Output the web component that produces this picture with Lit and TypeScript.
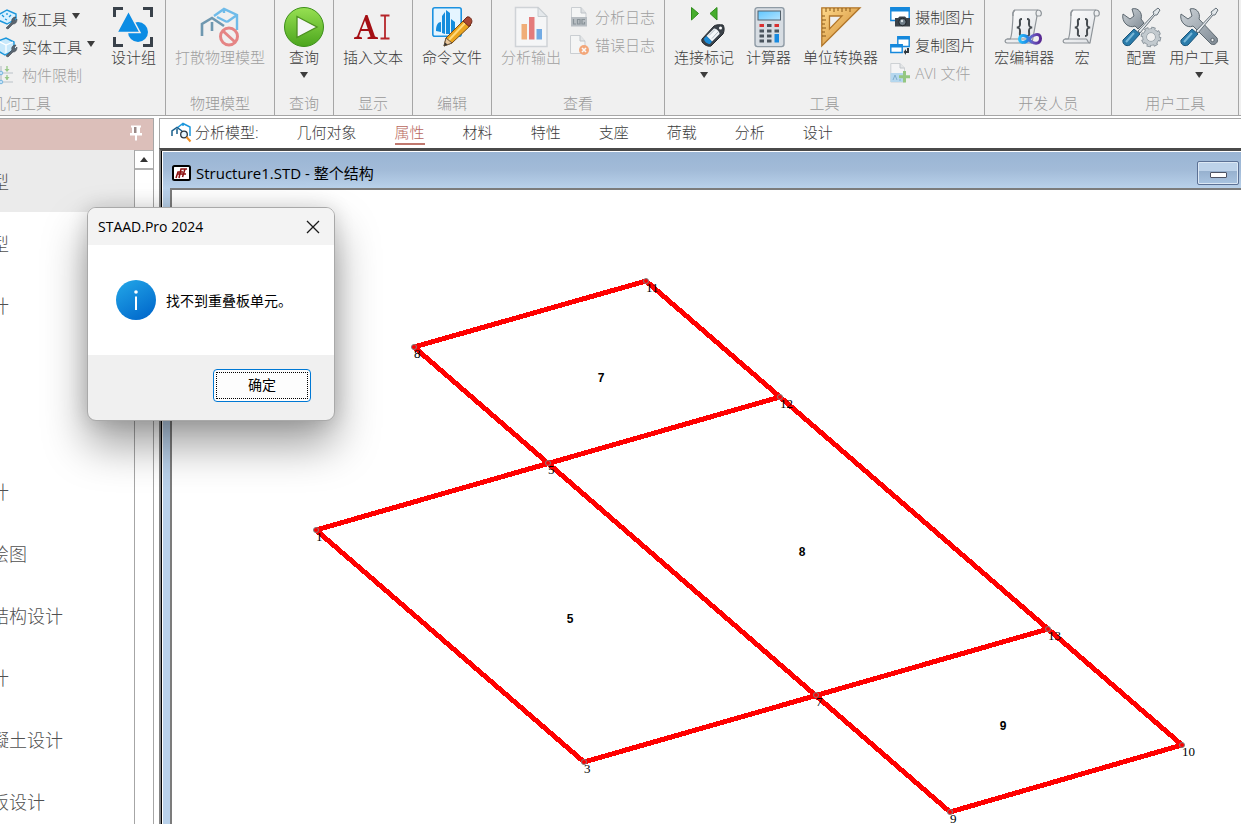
import { LitElement, html, css, svg, nothing } from "lit";
import { customElement, property } from "lit/decorators.js";

const defs = svg`<defs>
  <linearGradient id="blade" x1="0" y1="0" x2="1" y2="1"><stop offset="0" stop-color="#ffd98a"/><stop offset="1" stop-color="#c9822a"/></linearGradient>
  <linearGradient id="green" x1="0" y1="0" x2="0" y2="1"><stop offset="0" stop-color="#97e052"/><stop offset="1" stop-color="#4ba51d"/></linearGradient>
  <linearGradient id="sheet" x1="0" y1="0" x2="1" y2="1"><stop offset="0" stop-color="#fff"/><stop offset="1" stop-color="#dcdfe3"/></linearGradient>
  <linearGradient id="steel" x1="0" y1="0" x2="1" y2="1"><stop offset="0" stop-color="#cdd3d8"/><stop offset="1" stop-color="#7f8a94"/></linearGradient>
  <linearGradient id="inf" gradientUnits="userSpaceOnUse" x1="14" y1="0" x2="38" y2="0"><stop offset="0" stop-color="#2cc8ff"/><stop offset=".35" stop-color="#1b8fe8"/><stop offset=".6" stop-color="#6a5cc4"/><stop offset="1" stop-color="#55208a"/></linearGradient>
  <linearGradient id="lcd" x1="0" y1="0" x2="1" y2="1"><stop offset="0" stop-color="#5fc6ff"/><stop offset="1" stop-color="#b5e4ff"/></linearGradient>
</defs>`;

const wrench = svg`<path d="M2 7 9 12 13 9 11 2C17 0 22 6 20 12L38 31C40 35 36 39 32 37L14 19C8 22 0 15 2 7Z" fill="url(#steel)" stroke="#5d6870" stroke-width="1"/>`;
const driver = svg`<path d="M17 24 33 7 32 5 37 1 39 3 36 8 34 8 19 26Z" fill="#e2e7ea" stroke="#66717a"/><path d="M13 22 19 27 9 38C5 40 1 37 2 33Z" fill="#2b7cab" stroke="#1c5578"/><path d="M13 26 5 35" stroke="#79b8d8" stroke-width="2"/>`;
const gear = svg`<g><circle cx="30" cy="30" r="8.500" fill="none" stroke="#89939b" stroke-width="3.600" stroke-dasharray="4 2.675"/><circle cx="30" cy="30" r="6.300" fill="none" stroke="#89939b" stroke-width="5"/><circle cx="30" cy="30" r="8.400" fill="none" stroke="#c3cacf" stroke-width="2" stroke-dasharray="2.600 3.997" stroke-dashoffset="-.7"/><circle cx="30" cy="30" r="6.300" fill="none" stroke="#c3cacf" stroke-width="3.400"/><circle cx="30" cy="30" r="3.800" fill="#f0f0f0"/></g>`;
const scroll = svg`<path d="M11 3H34C38 3 38 8 36 9H33L28 36H3C1 36 0 33 3 32H6C8 31 9 12 9 6Z" fill="url(#sheet)" stroke="#8e9499" stroke-width="1.2"/><path d="M11 3C8 4 9 7 9 9M34 3C31 4 32 8 33 9M3 32H24C26 32 25 36 28 36" fill="none" stroke="#8e9499" stroke-width="1.2"/><path d="M18 12C15 12 16 14 16 17 16 20 15 20 13 20.500 15 21 16 21 16 24 16 27 15 29 18 29M23 12C26 12 25 14 25 17 25 20 26 20 28 20.500 26 21 25 21 25 24 25 27 26 29 23 29" fill="none" stroke="#454b50" stroke-width="2"/>`;
const spanner = svg`<path d="M9 19 15 13C14 10 16 8 19 8L17 11 18 12 20 10C20 14 18 15 16 15L11 20Z" fill="#5c6670" stroke="#3c454d" stroke-width=".6"/>`;

const art: Record<string, unknown> = {
  plate: svg`<path d="M1 6 10 1 19 5V10L10 15 1 11Z" fill="#d9f1ff" stroke="#1c97dc" stroke-width="1.400"/><path d="M5 6 7 8M10 4V6M12 8 14 6M8 10 10 11" stroke="#1c97dc" stroke-width="1.300"/>${spanner}`,
  solid: svg`<path d="M1 4 9 1 17 5V13L8 18 1 14Z" fill="#c9e9fb" stroke="#1c97dc" stroke-width="1.400"/><path d="M1 4 9 8 16 5M9 8V16" fill="none" stroke="#fff" stroke-width="1.300"/>${spanner}`,
  member: svg`<g opacity=".6"><path d="M4 1V19M4 8H16M4 17H16" stroke="#98a4ad" stroke-width="1.200"/><path d="M10 1V6M10 10V15" stroke="#5fae42" stroke-width="1.300"/><path d="M7.500 4H12.500L10 7ZM7.500 12H12.500L10 15Z" fill="#5fae42"/><circle cx="4" cy="8" r="1.800" fill="#a8dcff" stroke="#2b93d6"/><circle cx="4" cy="17" r="1.800" fill="#a8dcff" stroke="#2b93d6"/></g>`,
  group: svg`<path d="M1.500 10V1.500H10M30 1.500H38.500V10M38.500 30V38.500H30M10 38.500H1.500V30" fill="none" stroke="#39414a" stroke-width="3"/><circle cx="25" cy="25" r="10" fill="#0b8ce4"/><path d="M15.500 4 27 25.500H4Z" fill="#0b8ce4" stroke="#f0f0f0" stroke-width="1.500"/>`,
  model: svg`<g fill="none" opacity=".65"><path d="M14 9 24 2 37 8V23M24 2V6M37 8 27 15M27 15 17 10" stroke="#2ba0e6" stroke-width="2.400"/><path d="M2 29V17L12 11 24 19M12 15V24" stroke="#2b6a8f" stroke-width="2.600"/></g><g fill="none" stroke="#e58585" stroke-width="3"><circle cx="29" cy="29.500" r="8.500"/><path d="M23 24 35 35"/></g>`,
  play: svg`<circle cx="20" cy="20" r="19.500" fill="url(#green)" stroke="#3c8f1a"/><path d="M13 9.500 33 20 13 30.500Z" fill="#f4f5f6" stroke="#4c8f1f" stroke-width="1.300"/>`,
  ibeam: svg`<path d="M27.500 8.500H31.500L32 9.500 32.500 8.500H36.500M27.500 31.500H31.500L32 30.500 32.500 31.500H36.500M32 9V31" fill="none" stroke="#b5262a" stroke-width="1.800"/><path d="M1 32V30.500L4 29.500 12.500 8H14.500L22 29.500 25 30.500V32H14.500V30.500L17.500 29.500 15.500 24H8L6 29.500 9 30.500V32ZM8.700 22H14.800L12 13.500Z" fill="#a40f14"/>`,
  command: svg`<rect x=".8" y=".8" width="28.400" height="28.400" rx="2" fill="#e5f5ff" stroke="#1c92e0" stroke-width="1.600"/><path d="M4 24C4 18 6 15 9 15V25ZM10 26V9L13 5V27ZM14 27V3L18 6V27ZM19 26V12L23 15V24Z" fill="#158ddd"/><path d="M12 39 14 31 33 12 39 18 20 36Z" fill="#eaa51f" stroke="#7a4d16"/><path d="M17 33 34 15" stroke="#ffd97a" stroke-width="2"/><path d="M12 39 14 31 20 36Z" fill="#e9c79c" stroke="#6b5844"/><path d="M12 39 13 35.500 15.500 37.500Z" fill="#333"/><path d="M31 14 35 10C38 9 41 13 39.500 16L37 19.500Z" fill="#a84833" stroke="#6d2a1c"/>`,
  output: svg`<g opacity=".7"><path d="M4.500.5H27L36 9.500V39.500H4.500Z" fill="#f8f9fa" stroke="#c2c8cd" stroke-width="1.500"/><path d="M27 .5V9.500H36Z" fill="#e0e5e9" stroke="#b4bcc2"/><path d="M10.500 17H16V32.500H10.500Z" fill="#f09245"/><path d="M18 10H23.500V32.500H18Z" fill="#e04a4a"/><path d="M25.500 22H31V32.500H25.500Z" fill="#3e8fe0"/></g>`,
  log: svg`<g opacity=".65"><path d="M1.500.5H11L16 6V11H1.500Z" fill="#f7f8f9" stroke="#b6bdc3"/><path d="M11 .5V6H16" fill="#d3d8dc" stroke="#a4acb2"/><path d="M1 10H17V19.500H1Z" fill="#99a3aa"/><path d="M3.500 12V17H6M7.500 12.500H10V17H7.500ZM15 12.500H12V17H14.500V15" fill="none" stroke="#52606a" stroke-width="1.200"/></g>`,
  error: svg`<g opacity=".65"><path d="M.5.5H10L15 6V18.500H.5Z" fill="#f7f8f9" stroke="#b6bdc3"/><path d="M10 .5V6H15" fill="#dce0e3" stroke="#a4acb2"/><circle cx="14" cy="15" r="5" fill="#f5813c"/><path d="M12 13 16 17M16 13 12 17" stroke="#fff" stroke-width="1.600"/></g>`,
  tag: svg`<path d="M7.500.5 14.500 6.500 7.500 13Z" fill="#46ad2d" stroke="#2f8c1b"/><path d="M33 .5 26 6.500 33 13Z" fill="#46ad2d" stroke="#2f8c1b"/><path d="M18 32 30 19C32 17.500 36 17.500 39 18 40.500 20 40.500 24 39 27L27 39C24 40.500 16 36 18 32Z" fill="#3b4249" stroke="#262b30"/><path d="M22.500 29 30 21.500C32 21 36 25 35.500 27L28 34.500Z" fill="#f4f7f9"/><path d="M20 31.500 22.500 29 28 34.500 26 37C23 37 20 34.500 20 31.500Z" fill="#1b8bd6"/><path d="M25 28.500 31 22.500M28 31.500 34 25" stroke="#aeb9c1"/><circle cx="36.500" cy="21" r="1.500" fill="#fff"/>`,
  calc: svg`<rect x="6" y=".6" width="29" height="39" rx="2.500" fill="#d7dde3" stroke="#8f9ba5" stroke-width="1.400"/><rect x="9" y="4" width="22.500" height="9" fill="url(#lcd)" stroke="#53616c"/><path d="M10.500 18.500H15M25.500 18.500H30" stroke="#d93030" stroke-width="2.800"/><path d="M18 18.500H22.500M10.500 24H15M18 24H22.500M25.500 24H30M10.500 29H15M18 29H22.500M10.500 34H15M18 34H22.500" stroke="#4b555e" stroke-width="2.800"/><path d="M25.500 27H30V35.500H25.500Z" fill="#178ae0"/>`,
  square: svg`<path d="M.8.8H39L.8 39Z" fill="url(#blade)" stroke="#b1762a" stroke-width="1.300"/><path d="M8.500 9H21L8.500 22Z" fill="#f0f0f0" stroke="#b1762a" stroke-width="1.300"/><path d="M5 1V5M9 1V4M13 1V5M17 1V4M21 1V5M25 1V4M29 1V5M1 9H4M1 13H5M1 17H4M1 21H5M1 25H4M1 29H5" stroke="#875616"/>`,
  camera: svg`<path d="M.8.8H19.200V13.500H.8Z" fill="#fff" stroke="#1588dc" stroke-width="1.400"/><path d="M.5.5H19.500V4.500H.5Z" fill="#1588dc"/><path d="M5 11H8L9.500 9.500H15L16.500 11H20V19.500H5Z" fill="#3a4249"/><circle cx="12.500" cy="15" r="3.700" fill="#6f7d88" stroke="#1c2226"/><circle cx="12" cy="14" r="1.200" fill="#d8e0e5"/>`,
  copy: svg`<path d="M7.800 1.800H19.200V11.500H7.800Z" fill="#fff" stroke="#1588dc" stroke-width="1.400"/><path d="M7.500 1.500H19.500V4.500H7.500Z" fill="#1588dc"/><path d="M.8 9.800H12.200V17.500H.8Z" fill="#fff" stroke="#1588dc" stroke-width="1.400"/><path d="M.5 9.500H12.500V12.500H.5Z" fill="#1588dc"/><path d="M18 13V17H15" fill="none" stroke="#30373d" stroke-width="2"/><path d="M16 14V20L13.500 17Z" fill="#30373d"/>`,
  avi: svg`<g opacity=".6"><path d="M.8.5H10L14.500 5V19H.8Z" fill="#f7f8f9" stroke="#b6bdc3"/><path d="M10 .5V5H14.500" fill="#dce0e3" stroke="#a4acb2"/><path d="M.5 10H13V19H.5Z" fill="#8fc8ee"/><path d="M3 17 5 12 7 17M9 17H11" fill="none" stroke="#3681b5"/><path d="M14.500 8V19.500M9 13.800H20" stroke="#58ad38" stroke-width="3"/></g>`,
  editor: svg`${scroll}<path d="M25 32C22 27.500 15.500 27 15.500 32S22 36 25 32 36.500 24.500 36.500 31.500 28 37 25 32Z" fill="none" stroke="url(#inf)" stroke-width="3"/>`,
  macro: scroll,
  config: svg`<path d="M2 7 9 12 13 9 11 2C17 0 22 6 20 12L23 16 17 22 14 19C8 22 0 15 2 7Z" fill="url(#steel)" stroke="#5d6870"/>${driver}${gear}`,
  tools: svg`${wrench}<circle cx="33.500" cy="33" r="1.700" fill="#eef1f3" stroke="#59646c"/>${driver}`,
  analysis: svg`<g fill="none"><path d="M6 6 12 1.500 19 5V14M12 1.500V4" stroke="#1c97dc" stroke-width="1.500"/><path d="M1 14V9L6 5.500 11 9M6 7V12" stroke="#1a5f8c" stroke-width="1.500"/><circle cx="13" cy="12.500" r="3.300" fill="#e6f5ff" stroke="#26323c" stroke-width="1.300"/><path d="M15.500 15 19.500 19.500" stroke="#ee8d22" stroke-width="2"/></g>`,
};

@customElement("ui-icon")
class UiIcon extends LitElement {
  static styles = css`
    :host { display: block; flex: none; }
    svg { display: block; overflow: visible; }
  `;
  @property() name = "";
  @property({ type: Number }) size = 20;
  render() {
    const box = this.size;
    return html`<svg width=${box} height=${box} viewBox="0 0 ${box} ${box}" aria-hidden="true">${defs}${art[this.name]}</svg>`;
  }
}

interface Tool { icon: string; label: string; arrow?: boolean; off?: boolean }
type Slot = Tool | Tool[];
interface Group { title: string; slots: Slot[]; kind?: string }

const groups: Group[] = [
  { title: "几何工具", kind: "first", slots: [
    [{ icon: "plate", label: "板工具", arrow: true }, { icon: "solid", label: "实体工具", arrow: true }, { icon: "member", label: "构件限制", off: true }],
    { icon: "group", label: "设计组" }] },
  { title: "物理模型", slots: [{ icon: "model", label: "打散物理模型", off: true }] },
  { title: "查询", slots: [{ icon: "play", label: "查询", arrow: true }] },
  { title: "显示", slots: [{ icon: "ibeam", label: "插入文本" }] },
  { title: "编辑", slots: [{ icon: "command", label: "命令文件" }] },
  { title: "查看", kind: "view", slots: [{ icon: "output", label: "分析输出", off: true },
    [{ icon: "log", label: "分析日志", off: true }, { icon: "error", label: "错误日志", off: true }]] },
  { title: "工具", kind: "wide", slots: [{ icon: "tag", label: "连接标记", arrow: true }, { icon: "calc", label: "计算器" }, { icon: "square", label: "单位转换器" },
    [{ icon: "camera", label: "摄制图片" }, { icon: "copy", label: "复制图片" }, { icon: "avi", label: "AVI 文件", off: true }]] },
  { title: "开发人员", slots: [{ icon: "editor", label: "宏编辑器" }, { icon: "macro", label: "宏" }] },
  { title: "用户工具", slots: [{ icon: "config", label: "配置" }, { icon: "tools", label: "用户工具", arrow: true }] },
];

@customElement("ribbon-bar")
class RibbonBar extends LitElement {
  static styles = css`
    :host { display: flex; flex: none; height: 115px; overflow: hidden; background: #f0f0f0; border-bottom: 1px solid #a6a6a6; color: #3c3c3c; }
    .group { flex: none; display: flex; flex-direction: column; justify-content: space-between; border-right: 1px solid #a6a6a6; padding: 2px 9px 0; }
    .first { width: 270px; margin-left: -123px; }
    .first .slots { justify-content: flex-end; gap: 16px; }
    .first .rows { padding-top: 2px; }
    .view .slots { gap: 9px; }
    .wide .slots { gap: 12px; }
    .slots { display: flex; align-items: flex-start; gap: 8px; }
    .title { text-align: center; line-height: 24px; color: #999; }
    .rows { display: flex; flex-direction: column; }
    button { font: inherit; color: inherit; background: none; border: 0; padding: 0; white-space: nowrap; display: flex; align-items: center; }
    button:disabled { color: #a0a0a0; }
    .row { height: 28px; gap: 5px; }
    .row ui-icon { padding-top: 2px; }
    .big { flex-direction: column; padding-top: 5px; line-height: 20px; }
    .arrow { width: 8px; height: 6px; background: #3c3c3c; clip-path: polygon(0 0, 100% 0, 50% 100%); }
    .big .arrow { margin-top: 5px; }
    .row .arrow { margin-bottom: 4px; }
  `;
  private big(t: Tool) {
    return html`<button class="big" ?disabled=${t.off}><ui-icon name=${t.icon} size="40"></ui-icon><span>${t.label}</span>${t.arrow ? html`<span class="arrow"></span>` : nothing}</button>`;
  }
  private row(t: Tool) {
    return html`<button class="row" ?disabled=${t.off}><ui-icon name=${t.icon} size="20"></ui-icon><span>${t.label}</span>${t.arrow ? html`<span class="arrow"></span>` : nothing}</button>`;
  }
  render() {
    return groups.map(g => html`<section class="group ${g.kind ?? ""}">
      <div class="slots">${g.slots.map(s => Array.isArray(s) ? html`<div class="rows">${s.map(t => this.row(t))}</div>` : this.big(s))}</div>
      <div class="title">${g.title}</div>
    </section>`);
  }
}

@customElement("workflow-panel")
class WorkflowPanel extends LitElement {
  static styles = css`
    :host { display: flex; flex-direction: column; flex: none; width: 153px; border-top: 1px solid #a6a6a6; border-right: 1px solid #a6a6a6; overflow: hidden; background: #fff; }
    header { flex: none; display: flex; justify-content: flex-end; align-items: center; height: 31px; padding-right: 10px; background: #dcbfba; }
    header button { padding: 0; border: 0; background: none; display: block; }
    .body { flex: 1; min-height: 0; display: flex; }
    ul { flex: 1; list-style: none; margin: 0; padding: 0; overflow: hidden; }
    li a { display: block; height: 62px; line-height: 64px; font-size: 18px; color: #505050; text-decoration: none; white-space: nowrap; margin-left: -9px; }
    li.on { background: #ebebeb; }
    .bar { flex: none; width: 18px; border-left: 1px solid #a6a6a6; }
    .up { display: flex; align-items: center; justify-content: center; width: 100%; height: 20px; padding: 0; border: 0; border-bottom: 2px solid #b0b0b0; border-top: 1px solid #b0b0b0; background: #fff; }
    .up span { width: 8px; height: 5px; background: #333; clip-path: polygon(50% 0, 100% 100%, 0 100%); }
  `;
  render() {
    const items = ["型", "型", "计", "", "", "计", "绘图", "结构设计", "计", "凝土设计", "板设计"];
    return html`<header><button aria-label="固定"><svg width="14" height="16" viewBox="0 0 14 16"><path d="M2 .5H12V2.500H11V8H13V10.500H8V15.500H6V10.500H1V8H3V2.500H2Z" fill="#fff"/><path d="M5 2H7.500V8H5Z" fill="#9a8a88"/></svg></button></header>
      <div class="body">
        <ul>${items.map((t, i) => html`<li class=${i === 0 ? "on" : ""}><a href="#">${t || "\u00a0"}</a></li>`)}</ul>
        <div class="bar"><button class="up" aria-label="向上滚动"><span></span></button></div>
      </div>`;
  }
}

type Point = [number, number];
const nodes: Record<string, Point> = {
  "1": [144, 340], "3": [412, 572], "5": [376, 273], "7": [644, 505], "8": [242, 157], "9": [778, 622],
  "10": [1010, 555], "11": [474, 91], "12": [608, 207], "13": [876, 439],
};
const edges = [["8", "11"], ["11", "10"], ["8", "9"], ["1", "12"], ["1", "3"], ["3", "13"], ["9", "10"]];
const plates: [string, number, number][] = [["7", 429, 192], ["8", 630, 366], ["5", 398, 433], ["9", 831, 540]];

@customElement("model-window")
class ModelWindow extends LitElement {
  static styles = css`
    :host { flex: 1; min-height: 0; display: flex; flex-direction: column; border-top: 3px solid #4a4a4a; border-left: 2px solid #858585; }
    .frame { flex: 1; min-height: 0; display: flex; flex-direction: column; border-left: 1px solid #000; background: #b9d1ea; box-shadow: inset 1px 1px #fff; padding: 1px 0 0 8px; }
    .bar { flex: none; display: flex; align-items: center; gap: 4px; box-sizing: border-box; height: 36px; margin-left: -7px; padding: 6px 2px 0 9px; background: linear-gradient(#9ab5d4, #a2bbd8 50%, #b9d1ea); color: #000; }
    .bar h1 { flex: 1; margin: 0; font-size: 15px; font-weight: 400; line-height: 20px; }
    .min { width: 42px; height: 24px; padding: 4px 0 0; border: 1px solid #5c7195; border-radius: 2px; box-shadow: inset 0 0 0 1px #dce8f4; background: linear-gradient(#bdd2e9 42%, #97b1cf 42%, #a9c4e0); display: flex; justify-content: center; align-items: center; }
    .min span { width: 15px; height: 4px; border: 1px solid #4c5263; border-radius: 1px; background: #fff; }
    .client { flex: 1; min-height: 0; overflow: hidden; background: #fff; border-top: 2px solid #7c7c7c; border-left: 2px solid #7c7c7c; }
    .client svg { display: block; width: 100%; height: 100%; }
    .edge { stroke: #f00; stroke-width: 5; shape-rendering: crispEdges; }
    .node { fill: #f00; stroke: #808080; stroke-width: 1; }
    text { font-family: "Liberation Serif", serif; font-size: 13px; fill: #000; }
    .plate { font-family: "Liberation Mono", monospace; font-size: 12px; font-weight: 700; text-anchor: middle; }
  `;
  render() {
    return html`<div class="frame">
      <div class="bar">
        <svg width="20" height="18" viewBox="0 0 20 18" aria-hidden="true"><rect x="1" y="2" width="17" height="14" rx="1.500" fill="#fff" stroke="#000" stroke-width="2"/><path d="M4 14 6 8H11M7 14 9 5H15M10.500 13 13 5M6 10H14" fill="none" stroke="#8c1010" stroke-width="1.500"/></svg>
        <h1>Structure1.STD - 整个结构</h1>
        <button class="min" aria-label="最小化"><span></span></button>
      </div>
      <div class="client"><svg role="img" aria-label="整个结构">
        ${edges.map(([a, b]) => svg`<line class="edge" x1=${nodes[a][0]} y1=${nodes[a][1]} x2=${nodes[b][0]} y2=${nodes[b][1]}></line>`)}
        ${Object.entries(nodes).map(([n, [x, y]]) => svg`<circle class="node" cx=${x} cy=${y} r="2.500"></circle><text x=${x} y=${y + 11}>${n}</text>`)}
        ${plates.map(([n, x, y]) => svg`<text class="plate" x=${x} y=${y}>${n}</text>`)}
      </svg></div>
    </div>`;
  }
}

@customElement("message-box")
class MessageBox extends LitElement {
  static styles = css`
    :host { position: absolute; left: 87px; top: 207px; width: 246px; border: 1px solid #a9a9a9; border-radius: 9px; overflow: hidden; background: #f0f0f0; color: #000; box-shadow: 0 24px 44px rgba(0, 0, 0, .38), 0 0 20px rgba(0, 0, 0, .14); font-size: 14px; }
    header { display: flex; align-items: center; justify-content: space-between; height: 37px; padding: 0 14px 0 10px; background: #f3f3f3; }
    h2 { margin: 0; font-size: 14px; font-weight: 400; }
    .close { padding: 0; border: 0; background: none; display: block; }
    .close svg, .content svg { display: block; }
    .content { display: flex; align-items: center; gap: 10px; height: 110px; padding-left: 28px; background: #fff; }
    p { margin: 0; }
    footer { display: flex; justify-content: flex-end; padding: 14px 23px 18px; }
    .ok { width: 98px; height: 33px; padding: 2px; border: 1px solid #0078d4; border-radius: 4px; background: #fdfdfd; font: inherit; line-height: 20px; color: inherit; }
    .ok span { display: flex; align-items: center; justify-content: center; height: 100%; box-sizing: border-box; padding-bottom: 2px; border: 1px dotted #000; }
  `;
  render() {
    return html`<header><h2>STAAD.Pro 2024</h2><button class="close" aria-label="关闭"><svg width="14" height="14" viewBox="0 0 14 14"><path d="M1 1 13 13M13 1 1 13" stroke="#1a1a1a" stroke-width="1.300"/></svg></button></header>
      <div class="content">
        <svg width="40" height="40" viewBox="0 0 40 40" aria-hidden="true"><defs><linearGradient id="info" x1=".2" y1="0" x2=".8" y2="1"><stop offset="0" stop-color="#21a3e6"/><stop offset="1" stop-color="#0067cb"/></linearGradient></defs><circle cx="20" cy="20" r="20" fill="url(#info)"/><circle cx="20" cy="12" r="1.800" fill="#fff"/><path d="M20 16.500V30" stroke="#fff" stroke-width="2"/></svg>
        <p>找不到重叠板单元。</p>
      </div>
      <footer><button class="ok"><span>确定</span></button></footer>`;
  }
}

@customElement("app-root")
class AppRoot extends LitElement {
  static styles = css`
    :host { position: relative; display: flex; flex-direction: column; height: 100vh; overflow: hidden; background: #fff; font-family: "Open Sans", "Noto Sans CJK SC", sans-serif; font-size: 15px; font-weight: 300; }
    .work { flex: 1; min-height: 0; display: flex; gap: 5px; margin-top: 2px; }
    .main { flex: 1; min-width: 0; display: flex; flex-direction: column; }
    nav { flex: none; display: flex; align-items: center; gap: 38px; height: 29px; padding-left: 11px; border-top: 1px solid #a6a6a6; border-left: 1px solid #a6a6a6; white-space: nowrap; color: #3c3c3c; }
    .lead { display: flex; align-items: center; gap: 4px; line-height: 20px; padding-bottom: 3px; }
    nav a { color: inherit; text-decoration: none; line-height: 20px; padding-bottom: 1px; border-bottom: 2px solid transparent; }
    nav a.on { color: #b8675d; border-color: #c0786e; }
    message-box { font-weight: 400; }
    model-window { font-weight: 400; }
  `;
  render() {
    const tabs = ["几何对象", "属性", "材料", "特性", "支座", "荷载", "分析", "设计"];
    return html`<ribbon-bar></ribbon-bar>
      <div class="work">
        <workflow-panel></workflow-panel>
        <div class="main">
          <nav><span class="lead"><ui-icon name="analysis" size="20"></ui-icon>分析模型:</span>${tabs.map(t => html`<a href="#" class=${t === "属性" ? "on" : ""}>${t}</a>`)}</nav>
          <model-window></model-window>
        </div>
      </div>
      <message-box role="dialog" aria-label="STAAD.Pro 2024"></message-box>`;
  }
}
